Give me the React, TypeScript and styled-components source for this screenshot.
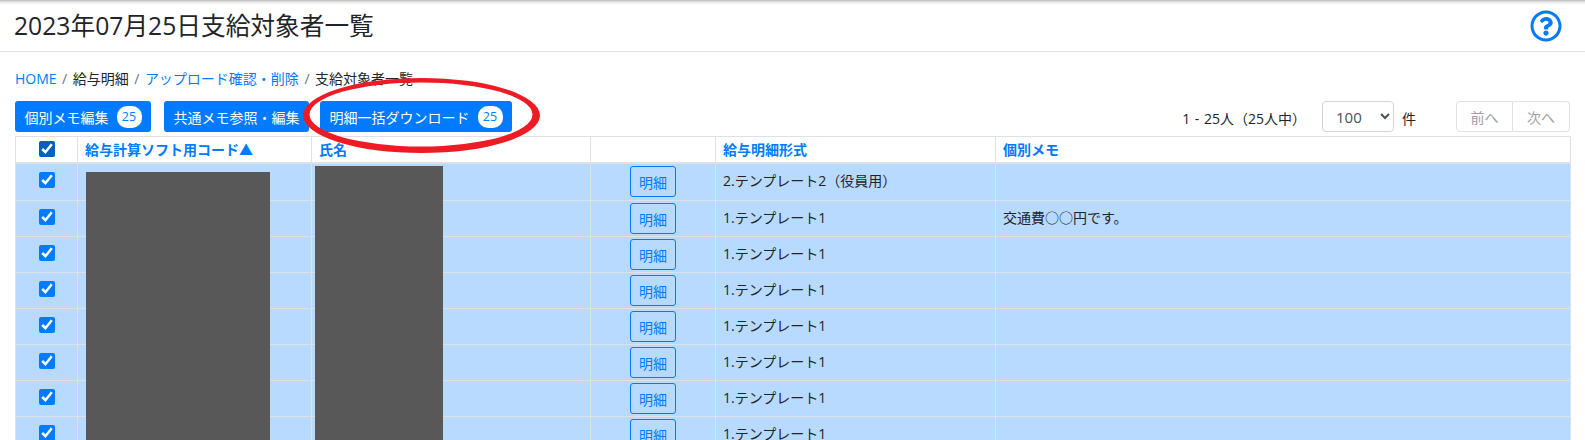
import React from 'react';
import styled, { createGlobalStyle } from 'styled-components';
import { FaRegQuestionCircle } from 'react-icons/fa';

const GlobalStyle = createGlobalStyle`
  html, body {
    margin: 0;
    padding: 0;
    height: 440px;
    overflow: hidden;
    background: #fff;
    font-family: "Open Sans", "Noto Sans CJK JP", sans-serif;
    font-size: 14px;
    color: #212529;
    text-spacing-trim: space-all;
  }
`;

const Page = styled.div`
  position: relative;
  height: 440px;
  overflow: hidden;
`;

const Header = styled.header`
  height: 52px;
  box-sizing: border-box;
  display: flex;
  align-items: center;
  justify-content: space-between;
  padding: 0 23px 0 14px;
  border-bottom: 1px solid #dee2e6;
  background: linear-gradient(#b8b8b8 0, #e8e8e8 2px, #fff 5px);
`;

const Title = styled.h1`
  margin: 0;
  font-size: 24.7px;
  font-weight: 400;
  color: #212529;
  line-height: 52px;
`;

const HelpIcon = styled(FaRegQuestionCircle)`
  font-size: 32px;
  color: #007bff;
`;

const Content = styled.main`
  padding: 0 15px;
`;

const Breadcrumb = styled.nav`
  display: flex;
  align-items: center;
  height: 20px;
  margin-top: 16px;
  margin-bottom: 13px;
`;

const Crumb = styled.span<{ $link?: boolean }>`
  color: ${p => (p.$link ? '#007bff' : '#212529')};
`;

const Slash = styled.span`
  color: #6c757d;
  padding: 0 5.5px;
`;

const Toolbar = styled.div`
  display: flex;
  align-items: center;
  height: 31px;
  margin-bottom: 4px;
`;

const PrimaryButton = styled.button<{ $gap?: number }>`
  display: inline-flex;
  align-items: center;
  height: 31px;
  padding: 0 9.5px;
  margin-right: ${p => p.$gap ?? 0}px;
  border: 0;
  border-radius: 3px;
  background: #007bff;
  color: #fff;
  font: inherit;
  white-space: nowrap;
`;

const Badge = styled.span`
  display: inline-flex;
  align-items: center;
  justify-content: center;
  width: 25px;
  height: 22px;
  margin-left: 8px;
  border-radius: 10px;
  background: #fff;
  color: #007bff;
  font-size: 12.5px;
`;

const Pager = styled.div`
  margin-left: auto;
  display: flex;
  align-items: center;
`;

const Count = styled.span`
  margin-right: 16px;
  padding-top: 3px;
  word-spacing: 1px;
`;

const PerPage = styled.select`
  width: 72px;
  height: 31px;
  box-sizing: border-box;
  padding: 0 9px;
  border: 1px solid #ced4da;
  border-radius: 4px;
  background: #fff;
  color: #495057;
  font: inherit;
  font-size: 15px;
`;

const Unit = styled.span`
  margin: 3px 40px 0 8px;
`;

const PageButton = styled.button<{ $last?: boolean }>`
  width: 57px;
  height: 31px;
  border: 1px solid #dee2e6;
  border-left-width: ${p => (p.$last ? 0 : 1)}px;
  border-radius: ${p => (p.$last ? '0 4px 4px 0' : '4px 0 0 4px')};
  background: #fff;
  color: #a0a0a0;
  font: inherit;
`;

const TableArea = styled.div`
  position: relative;
`;

const Table = styled.table`
  width: 1555px;
  table-layout: fixed;
  border-collapse: collapse;
`;

const Col = styled.col<{ $w: number }>`
  width: ${p => p.$w}px;
`;

const HeadCell = styled.th<{ $center?: boolean }>`
  height: 26px;
  box-sizing: border-box;
  padding: 0 7px;
  border: 1px solid #dee2e6;
  border-bottom: 2px solid #dee2e6;
  background: #fff;
  color: #007bff;
  font-weight: 700;
  text-align: ${p => (p.$center ? 'center' : 'left')};
  white-space: nowrap;
`;

const Row = styled.tr<{ $tall?: boolean }>`
  height: ${p => (p.$tall ? 38 : 36)}px;
  background: #b8daff;
`;

const Cell = styled.td<{ $center?: boolean }>`
  box-sizing: border-box;
  padding: 0 7px 3px;
  border: 1px solid #dee2e6;
  text-align: ${p => (p.$center ? 'center' : 'left')};
  white-space: nowrap;
`;

const ButtonCell = styled(Cell)`
  padding: 0 7px;
`;

const Check = styled.input<{ $dark?: boolean }>`
  display: block;
  width: 16px;
  height: 16px;
  margin: 0 auto;
  accent-color: ${p => (p.$dark ? '#0060bd' : '#007bff')};
`;

const DetailButton = styled.button`
  display: block;
  width: 46px;
  height: 31px;
  margin: 0 auto;
  padding: 0;
  border: 1px solid #007bff;
  border-radius: 3px;
  background: transparent;
  color: #007bff;
  font: inherit;
`;

const Redaction = styled.div<{ $left: number; $top: number; $width: number }>`
  position: absolute;
  left: ${p => p.$left}px;
  top: ${p => p.$top}px;
  width: ${p => p.$width}px;
  bottom: -400px;
  background: #585858;
`;

const Marker = styled.svg`
  position: absolute;
  left: 300px;
  top: 75px;
  width: 243px;
  height: 81px;
  pointer-events: none;
`;

const columnWidths = [62, 234, 279, 125, 280, 575];

const rows = [
  { format: '2.テンプレート2（役員用）', memo: '' },
  { format: '1.テンプレート1', memo: '交通費○○円です。' },
  ...Array.from({ length: 6 }, () => ({ format: '1.テンプレート1', memo: '' })),
];

const App = () => {
  return (
    <Page>
      <GlobalStyle />
      <Header>
        <Title>2023年07月25日支給対象者一覧</Title>
        <HelpIcon />
      </Header>
      <Content>
        <Breadcrumb>
          <Crumb $link>HOME</Crumb>
          <Slash>/</Slash>
          <Crumb>給与明細</Crumb>
          <Slash>/</Slash>
          <Crumb $link>アップロード確認・削除</Crumb>
          <Slash>/</Slash>
          <Crumb>支給対象者一覧</Crumb>
        </Breadcrumb>
        <Toolbar>
          <PrimaryButton $gap={13}>
            個別メモ編集<Badge>25</Badge>
          </PrimaryButton>
          <PrimaryButton $gap={11}>共通メモ参照・編集</PrimaryButton>
          <PrimaryButton>
            明細一括ダウンロード<Badge>25</Badge>
          </PrimaryButton>
          <Pager>
            <Count>1 - 25人（25人中）</Count>
            <PerPage defaultValue="100">
              <option value="100">100</option>
            </PerPage>
            <Unit>件</Unit>
            <PageButton disabled>前へ</PageButton>
            <PageButton disabled $last>
              次へ
            </PageButton>
          </Pager>
        </Toolbar>
        <TableArea>
          <Table>
            <colgroup>
              {columnWidths.map((w, i) => (
                <Col key={i} $w={w} />
              ))}
            </colgroup>
            <thead>
              <tr>
                <HeadCell $center>
                  <Check type="checkbox" defaultChecked $dark />
                </HeadCell>
                <HeadCell>給与計算ソフト用コード▲</HeadCell>
                <HeadCell>氏名</HeadCell>
                <HeadCell />
                <HeadCell>給与明細形式</HeadCell>
                <HeadCell>個別メモ</HeadCell>
              </tr>
            </thead>
            <tbody>
              {rows.map((row, i) => (
                <Row key={i} $tall={i === 0}>
                  <Cell $center>
                    <Check type="checkbox" defaultChecked />
                  </Cell>
                  <Cell />
                  <Cell />
                  <ButtonCell $center>
                    <DetailButton>明細</DetailButton>
                  </ButtonCell>
                  <Cell>{row.format}</Cell>
                  <Cell>{row.memo}</Cell>
                </Row>
              ))}
            </tbody>
          </Table>
          <Redaction $left={71} $top={36} $width={184} />
          <Redaction $left={300} $top={30} $width={128} />
        </TableArea>
      </Content>
      <Marker viewBox="0 0 243 81">
        <path
          fillRule="evenodd"
          fill="#ed1c24"
          d="M3 40.5a118.5 37.5 0 1 0 237 0a118.5 37.5 0 1 0 -237 0ZM9.5 39.5a111.5 32 0 1 0 223 0a111.5 32 0 1 0 -223 0Z"
        />
      </Marker>
    </Page>
  );
};

export default App;
